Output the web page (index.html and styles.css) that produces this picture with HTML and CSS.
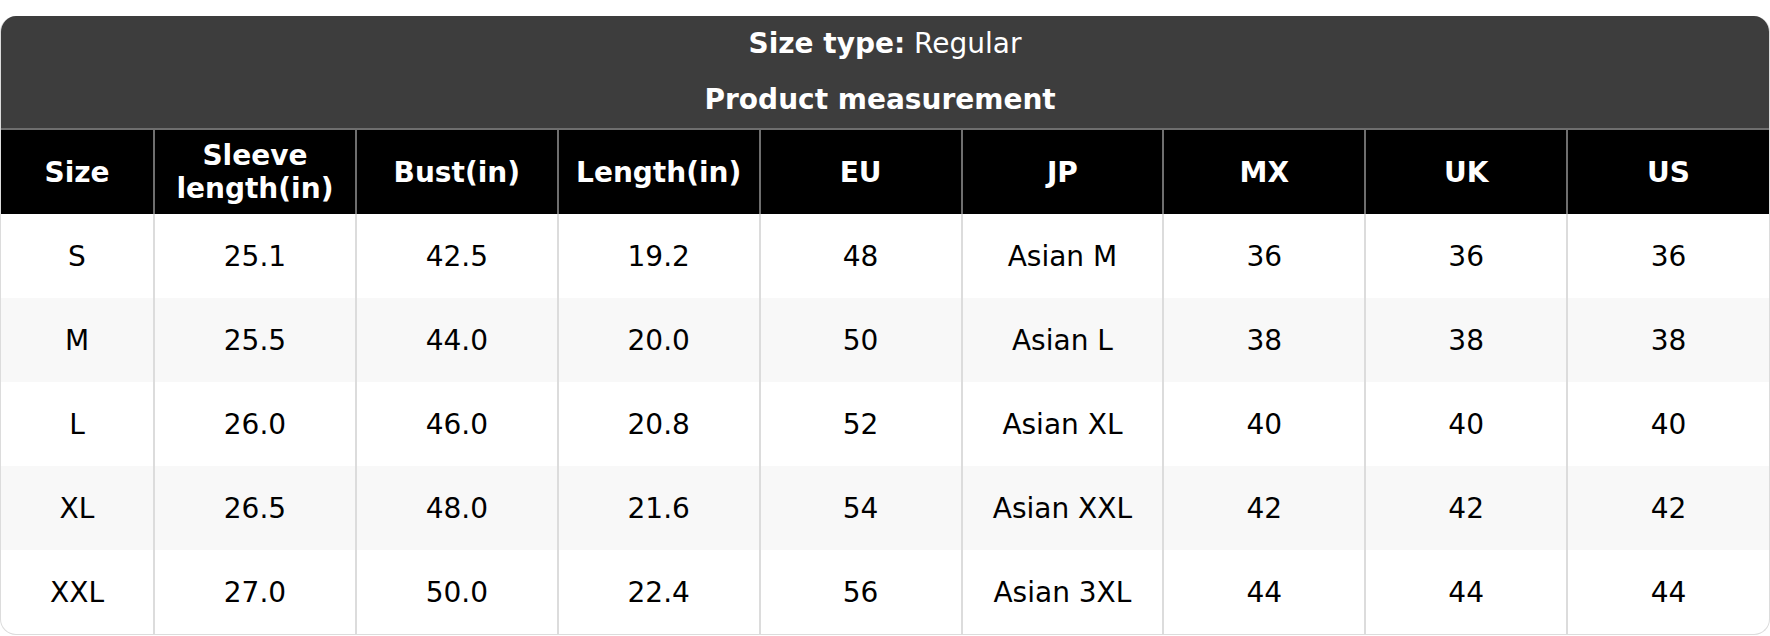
FILE: index.html
```html
<!DOCTYPE html>
<html>
<head>
<meta charset="utf-8">
<link rel="stylesheet" href="styles.css">
</head>
<body>
<div class="card">
  <div class="title">
    <div class="line"><b>Size type:</b> Regular</div>
    <div class="line"><b>Product measurement&nbsp;</b></div>
  </div>
  <table class="sizes">
    <colgroup>
      <col class="c-first">
      <col><col><col><col><col><col><col><col>
    </colgroup>
    <thead>
      <tr>
        <th>Size</th><th>Sleeve<br>length(in)</th><th>Bust(in)</th><th>Length(in)</th><th>EU</th><th>JP</th><th>MX</th><th>UK</th><th>US</th>
      </tr>
    </thead>
    <tbody>
      <tr><td>S</td><td>25.1</td><td>42.5</td><td>19.2</td><td>48</td><td>Asian M</td><td>36</td><td>36</td><td>36</td></tr>
      <tr><td>M</td><td>25.5</td><td>44.0</td><td>20.0</td><td>50</td><td>Asian L</td><td>38</td><td>38</td><td>38</td></tr>
      <tr><td>L</td><td>26.0</td><td>46.0</td><td>20.8</td><td>52</td><td>Asian XL</td><td>40</td><td>40</td><td>40</td></tr>
      <tr><td>XL</td><td>26.5</td><td>48.0</td><td>21.6</td><td>54</td><td>Asian XXL</td><td>42</td><td>42</td><td>42</td></tr>
      <tr><td>XXL</td><td>27.0</td><td>50.0</td><td>22.4</td><td>56</td><td>Asian 3XL</td><td>44</td><td>44</td><td>44</td></tr>
    </tbody>
  </table>
</div>
</body>
</html>
```
FILE: styles.css
```css
html, body {
  margin: 0;
  padding: 0;
  background: #fff;
}
body {
  padding-top: 16px;
  font-family: "DejaVu Sans", Verdana, sans-serif;
  font-size: 28px;
  color: #000;
}
.card {
  width: 1770px;
  box-sizing: border-box;
  border: 1px solid #dcdcdc;
  border-top: none;
  border-radius: 16px;
  overflow: hidden;
}
.title {
  background: #3d3d3d;
  color: #fff;
  text-align: center;
}
.line {
  height: 56px;
  line-height: 56px;
}
.sizes {
  width: 100%;
  border-collapse: collapse;
  table-layout: fixed;
}
.c-first {
  width: 153px;
}
.sizes th {
  background: #000;
  color: #fff;
  font-weight: bold;
  height: 84px;
  line-height: 33px;
  padding: 0;
  border-top: 2px solid #6e6e6e;
  border-left: 2px solid #6e6e6e;
  text-align: center;
  vertical-align: middle;
}
.sizes td {
  height: 84px;
  padding: 0;
  text-align: center;
  vertical-align: middle;
  border-left: 2px solid #dcdcdc;
  font-weight: normal;
}
.sizes th:first-child,
.sizes td:first-child {
  border-left: none;
}
.sizes tbody tr:nth-child(even) td {
  background: #f8f8f8;
}
```
